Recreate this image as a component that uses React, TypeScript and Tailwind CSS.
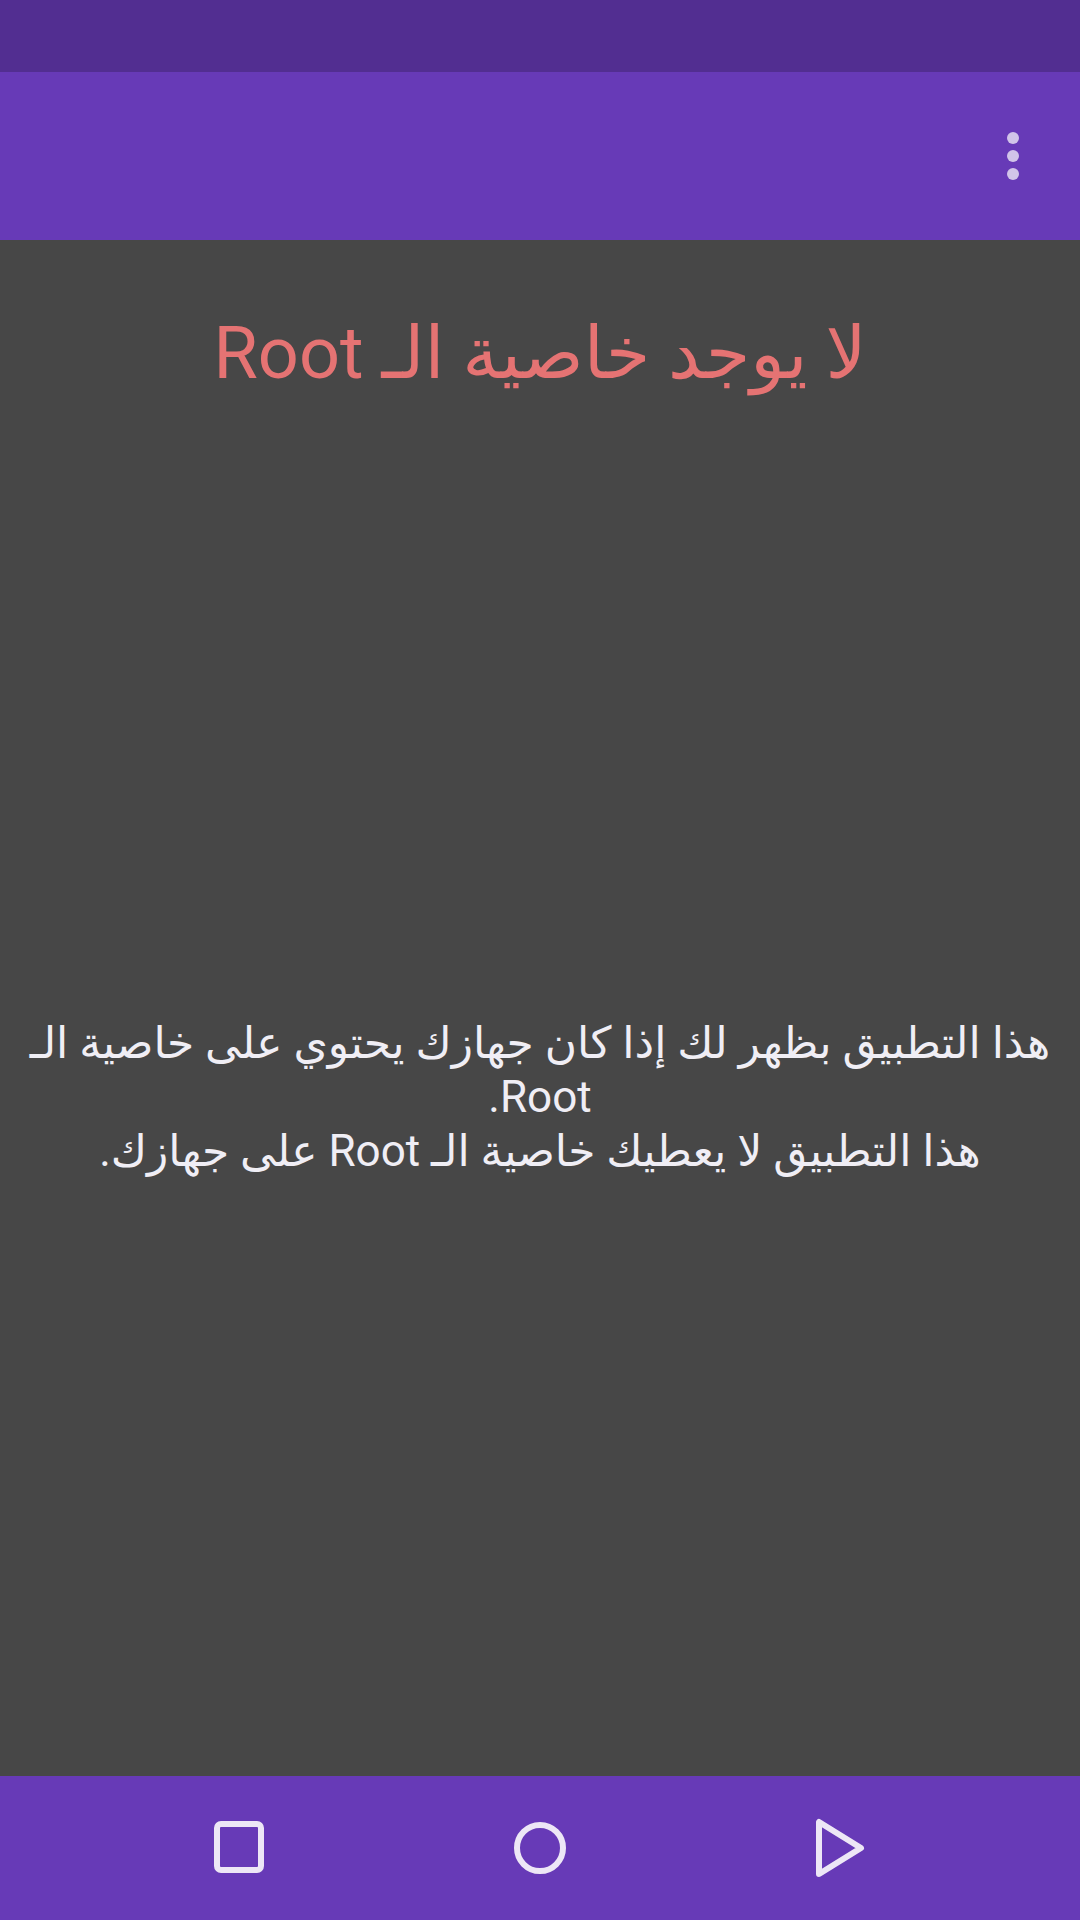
export default function App() {
  return (
    <div
      className="w-[1080px] h-[1920px] flex flex-col bg-[#474747] overflow-hidden"
      style={{ fontFamily: 'Roboto, "DejaVu Sans", sans-serif' }}
    >
      {/* status bar */}
      <div className="h-[72px] bg-[#522e91] shrink-0" />

      {/* app bar */}
      <div className="h-[168px] bg-[#673ab7] shrink-0 flex items-center justify-end pr-[61px]">
        <div className="flex flex-col items-center gap-[6px]">
          <span className="w-[12px] h-[12px] rounded-full bg-[#d1c4e9]" />
          <span className="w-[12px] h-[12px] rounded-full bg-[#d1c4e9]" />
          <span className="w-[12px] h-[12px] rounded-full bg-[#d1c4e9]" />
        </div>
      </div>

      {/* content */}
      <div className="flex-1 flex flex-col" dir="rtl">
        <h1 className="mt-[72px] text-center text-[72px] leading-[84px] text-[#e57373]">
          لا يوجد خاصية الـ Root
        </h1>
        <div className="flex-1 flex items-center justify-center px-[24px] pt-[22px]">
          <p className="text-center text-[44px] leading-[54px] text-[#f0eef5]">
            هذا التطبيق بظهر لك إذا كان جهازك يحتوي على خاصية الـ Root.
            <br />
            هذا التطبيق لا يعطيك خاصية الـ Root على جهازك.
          </p>
        </div>
      </div>

      {/* nav bar */}
      <div className="h-[144px] bg-[#673ab7] shrink-0 flex items-center justify-center gap-[180px]">
        <div className="w-[120px] flex justify-center">
          <svg width="56" height="60" viewBox="0 0 56 60">
            <rect x="5" y="6" width="44" height="46" rx="4" fill="none" stroke="#ede7f6" strokeWidth="6" />
          </svg>
        </div>
        <div className="w-[120px] flex justify-center">
          <svg width="60" height="60" viewBox="0 0 60 60">
            <circle cx="30" cy="30" r="23" fill="none" stroke="#ede7f6" strokeWidth="6" />
          </svg>
        </div>
        <div className="w-[120px] flex justify-center">
          <svg width="60" height="60" viewBox="0 0 60 60">
            <path
              d="M9 4 L9 56 L51 30 Z"
              fill="none"
              stroke="#ede7f6"
              strokeWidth="6"
              strokeLinejoin="round"
            />
          </svg>
        </div>
      </div>
    </div>
  );
}
